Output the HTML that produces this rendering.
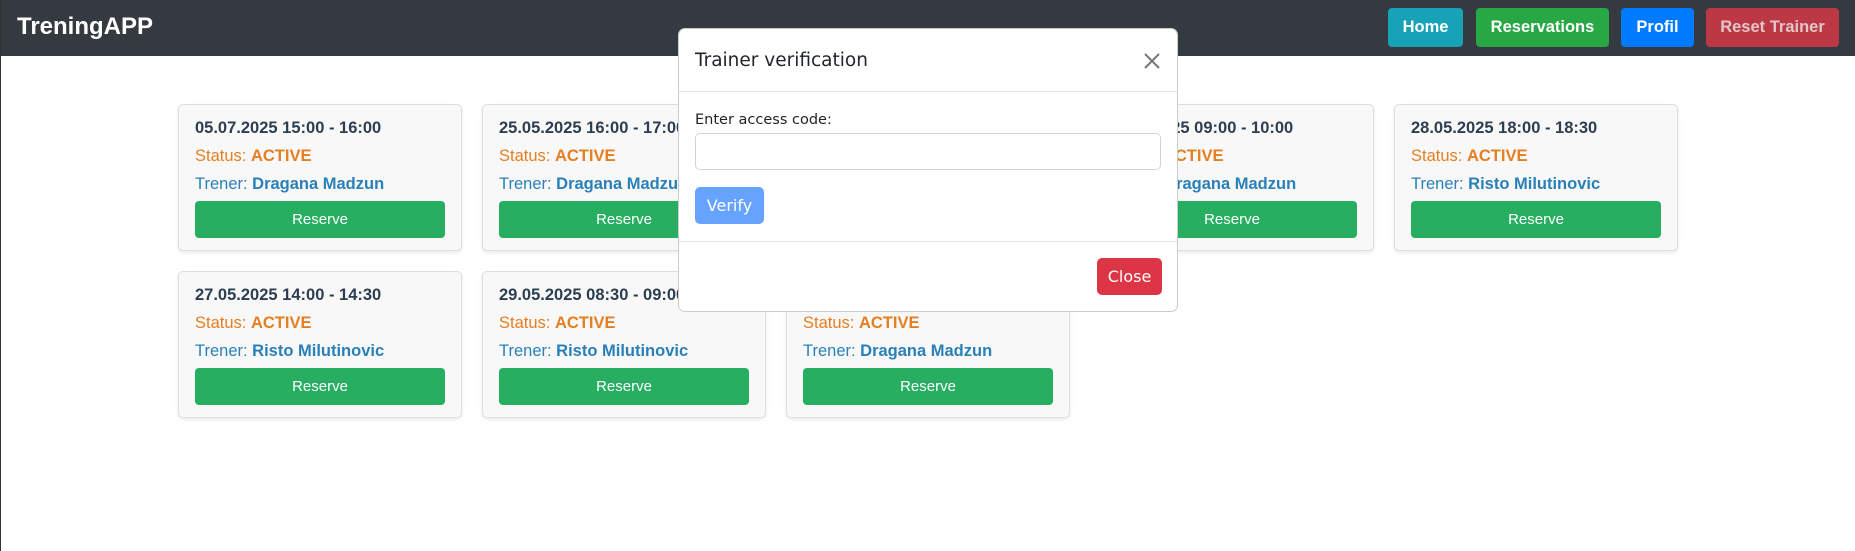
<!DOCTYPE html>
<html><head><meta charset="utf-8"><style>
*{box-sizing:border-box;margin:0;padding:0}
html,body{width:1855px;height:551px;overflow:hidden;background:#fff;font-family:"Liberation Sans",Arial,sans-serif}
body{position:relative}
.lb{position:absolute;left:0;top:0;width:1px;height:551px;background:#333}
.nav{position:absolute;left:0;top:0;width:1855px;height:56px;background:#343a40}
.brand{position:absolute;left:17px;top:13px;color:#fff;font-weight:bold;font-size:24px}
.nb{position:absolute;top:8px;height:39px;border-radius:4px;color:#fff;font-weight:bold;font-size:16.5px;line-height:39px;text-align:center}
.card{position:absolute;width:284px;height:147px;background:#f8f8f8;border:1px solid #ddd;border-radius:5px;box-shadow:0 2px 4px rgba(0,0,0,.08);padding:0 17px}
.d{position:absolute;left:16px;top:14px;font-weight:bold;font-size:16.5px;color:#2c3e50}
.s{position:absolute;left:16px;top:42px;font-size:16.5px;color:#e67e22}
.t{position:absolute;left:16px;top:70px;font-size:16.5px;color:#2980b9}
.r{position:absolute;left:16px;top:96px;width:250px;height:37px;background:#27ae60;border-radius:4px;color:#fff;text-align:center;line-height:37px;font-size:15px}
.modal{position:absolute;left:678px;top:28px;width:500px;height:284px;background:#fff;border:1px solid #ccc;border-radius:7px;font-family:"DejaVu Sans","Liberation Sans",sans-serif}
.mh{position:absolute;left:16px;top:21px;font-size:18.5px;color:#212529}
.hr1{position:absolute;left:0;top:62px;width:100%;border-top:1px solid #dee2e6}
.hr2{position:absolute;left:0;top:212px;width:100%;border-top:1px solid #dee2e6}
.lbl{position:absolute;left:16px;top:83px;font-size:14.5px;color:#212529}
.inp{position:absolute;left:16px;top:104px;width:466px;height:37px;border:1px solid #ced4da;border-radius:5px}
.vf{position:absolute;left:16px;top:158px;width:69px;height:37px;background:#66a3ff;border-radius:5px;color:#fff;font-size:16px;text-align:center;line-height:37px}
.cl{position:absolute;left:418px;top:229px;width:65px;height:37px;background:#dc3545;border-radius:5px;color:#fff;font-size:16px;text-align:center;line-height:37px}
</style></head><body>
<div class="nav">
<div class="brand">TreningAPP</div>
<div class="nb" style="left:1388px;width:75px;background:#17a2b8">Home</div>
<div class="nb" style="left:1476px;width:133px;background:#28a745">Reservations</div>
<div class="nb" style="left:1621px;width:73px;background:#007bff">Profil</div>
<div class="nb" style="left:1706px;width:133px;background:#bb3844;color:#e3c5c8">Reset Trainer</div>
</div>
<div class="lb"></div>

<div class="card" style="left:178px;top:104px"><div class="d">05.07.2025 15:00 - 16:00</div><div class="s">Status: <b>ACTIVE</b></div><div class="t">Trener: <b>Dragana Madzun</b></div><div class="r">Reserve</div></div>
<div class="card" style="left:482px;top:104px"><div class="d">25.05.2025 16:00 - 17:00</div><div class="s">Status: <b>ACTIVE</b></div><div class="t">Trener: <b>Dragana Madzun</b></div><div class="r">Reserve</div></div>
<div class="card" style="left:786px;top:104px"><div class="d">26.05.2025 09:00 - 10:00</div><div class="s">Status: <b>ACTIVE</b></div><div class="t">Trener: <b>Dragana Madzun</b></div><div class="r">Reserve</div></div>
<div class="card" style="left:1090px;top:104px"><div class="d">27.05.2025 09:00 - 10:00</div><div class="s">Status: <b>ACTIVE</b></div><div class="t">Trener: <b>Dragana Madzun</b></div><div class="r">Reserve</div></div>
<div class="card" style="left:1394px;top:104px"><div class="d">28.05.2025 18:00 - 18:30</div><div class="s">Status: <b>ACTIVE</b></div><div class="t">Trener: <b>Risto Milutinovic</b></div><div class="r">Reserve</div></div>
<div class="card" style="left:178px;top:271px"><div class="d">27.05.2025 14:00 - 14:30</div><div class="s">Status: <b>ACTIVE</b></div><div class="t">Trener: <b>Risto Milutinovic</b></div><div class="r">Reserve</div></div>
<div class="card" style="left:482px;top:271px"><div class="d">29.05.2025 08:30 - 09:00</div><div class="s">Status: <b>ACTIVE</b></div><div class="t">Trener: <b>Risto Milutinovic</b></div><div class="r">Reserve</div></div>
<div class="card" style="left:786px;top:271px"><div class="d">30.05.2025 10:00 - 11:00</div><div class="s">Status: <b>ACTIVE</b></div><div class="t">Trener: <b>Dragana Madzun</b></div><div class="r">Reserve</div></div>

<div class="modal">
<div class="mh">Trainer verification</div>
<svg style="position:absolute;left:464px;top:23px" width="18" height="18" viewBox="0 0 18 18"><path d="M2 2L16 16M16 2L2 16" stroke="#777" stroke-width="2"/></svg>
<div class="hr1"></div>
<div class="lbl">Enter access code:</div>
<div class="inp"></div>
<div class="vf">Verify</div>
<div class="hr2"></div>
<div class="cl">Close</div>
</div>
</body></html>
